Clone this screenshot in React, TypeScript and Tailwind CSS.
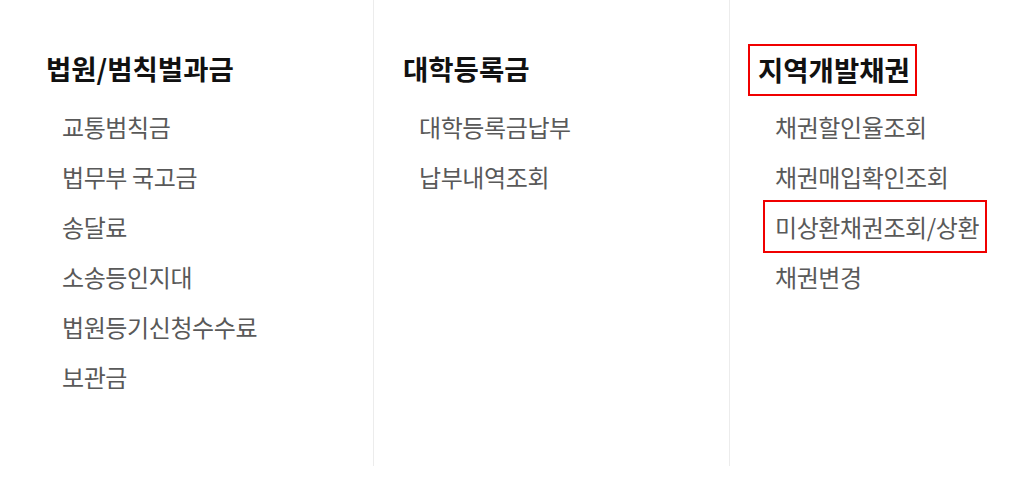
import React from 'react'

type Menu = {
  title: string
  items: string[]
  markTitle?: boolean
  markItem?: string
}

const menus: Menu[] = [
  {
    title: '법원/범칙벌과금',
    items: ['교통범칙금', '법무부 국고금', '송달료', '소송등인지대', '법원등기신청수수료', '보관금'],
  },
  {
    title: '대학등록금',
    items: ['대학등록금납부', '납부내역조회'],
  },
  {
    title: '지역개발채권',
    items: ['채권할인율조회', '채권매입확인조회', '미상환채권조회/상환', '채권변경'],
    markTitle: true,
    markItem: '미상환채권조회/상환',
  },
]

const MenuColumn = ({ menu, first }: { menu: Menu; first: boolean }) => {
  return (
    <div className={`w-[356px] shrink-0 h-[466px] pt-[50px] ${first ? '' : 'border-l border-[#ececec]'}`}>
      <h2 className="pl-[29px] h-[36px] mb-[16px] text-[27.5px] leading-[36px] font-bold text-[#111]">
        {menu.markTitle ? (
          <span className="inline-block -ml-[11px] -mt-[6px] pl-[8px] pr-[5px] pt-[5px] pb-[7px] border-2 border-[#f00000] leading-[36px]">
            {menu.title}
          </span>
        ) : (
          menu.title
        )}
      </h2>
      <ul className="pl-[45px]">
        {menu.items.map((item) => (
          <li key={item} className="h-[50px] text-[24px] tracking-[-0.4px] leading-[50px] text-[#595959]">
            {item === menu.markItem ? (
              <span className="inline-block -ml-[12px] -mt-[2px] pl-[10px] pr-[6px] border-2 border-[#f00000] leading-[49px]">
                {item}
              </span>
            ) : (
              item
            )}
          </li>
        ))}
      </ul>
    </div>
  )
}

export default function App() {
  return (
    <div
      className="w-[1024px] h-[485px] bg-white flex pl-[17px] overflow-hidden"
      style={{ fontFamily: '"Noto Sans CJK KR", "Noto Sans", sans-serif' }}
    >
      {menus.map((menu, i) => (
        <MenuColumn key={menu.title} menu={menu} first={i === 0} />
      ))}
    </div>
  )
}
